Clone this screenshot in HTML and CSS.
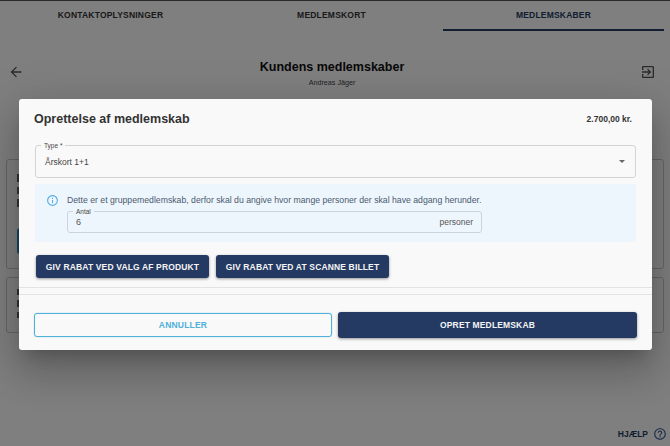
FILE: index.html
```html
<!DOCTYPE html>
<html lang="da">
<head>
<meta charset="utf-8">
<title>Kundens medlemskaber</title>
<link rel="stylesheet" href="styles.css">
</head>
<body>
<div class="page">
  <nav class="tabs">
    <div class="tab">KONTAKTOPLYSNINGER</div>
    <div class="tab">MEDLEMSKORT</div>
    <div class="tab tab-active">MEDLEMSKABER</div>
  </nav>
  <header class="head">
    <svg class="head-icon" viewBox="0 0 24 24" width="16" height="16"><path d="M20 11H7.83l5.59-5.59L12 4l-8 8 8 8 1.41-1.41L7.83 13H20z" fill="currentColor"/></svg>
    <div class="head-title">
      <h1>Kundens medlemskaber</h1>
      <p>Andreas Jäger</p>
    </div>
    <svg class="head-icon" viewBox="0 0 24 24" width="16" height="16"><path d="M3 5v4h2V5h14v14H5v-4H3v4a2 2 0 0 0 2 2h14c1.100 0 2-.9 2-2V5c0-1.100-.9-2-2-2H5c-1.100 0-2 .9-2 2zm7.590 10.590L12 17l5-5-5-5-1.410 1.410L13.170 11H3v2h10.170z" fill="currentColor"/></svg>
  </header>
  <section class="cards">
    <div class="card card-a"><div class="stub"></div><div class="stub"></div><div class="stub"></div><div class="card-btn"></div></div>
    <div class="card card-b"><div class="stub"></div><div class="stub"></div><div class="stub"></div></div>
  </section>
  <div class="help">HJÆLP
    <svg viewBox="0 0 24 24" width="14" height="14"><path d="M11 18h2v-2h-2v2zm1-16C6.480 2 2 6.480 2 12s4.480 10 10 10 10-4.480 10-10S17.520 2 12 2zm0 18c-4.410 0-8-3.590-8-8s3.590-8 8-8 8 3.590 8 8-3.590 8-8 8zm0-14c-2.210 0-4 1.790-4 4h2c0-1.100.9-2 2-2s2 .9 2 2c0 2-3 1.750-3 5h2c0-2.250 3-2.500 3-5 0-2.210-1.790-4-4-4z" fill="currentColor"/></svg>
  </div>
</div>
<div class="overlay"></div>
<div class="modal">
  <div class="modal-head">
    <h2>Oprettelse af medlemskab</h2>
    <span class="price">2.700,00 kr.</span>
  </div>
  <div class="select">
    <span class="legend">Type *</span>
    <span>Årskort 1+1</span>
    <span class="caret"></span>
  </div>
  <div class="info">
    <svg class="info-icon" viewBox="0 0 24 24" width="13" height="13"><path d="M11 7h2v2h-2zm0 4h2v6h-2zm1-9C6.480 2 2 6.480 2 12s4.480 10 10 10 10-4.480 10-10S17.520 2 12 2zm0 18c-4.410 0-8-3.590-8-8s3.590-8 8-8 8 3.590 8 8-3.590 8-8 8z" fill="currentColor"/></svg>
    <div class="info-body">
      <p>Dette er et gruppemedlemskab, derfor skal du angive hvor mange personer der skal have adgang herunder.</p>
      <div class="amount">
        <span class="legend legend-info">Antal</span>
        <span class="amount-value">6</span>
        <span class="amount-unit">personer</span>
      </div>
    </div>
  </div>
  <div class="discounts">
    <button class="btn">GIV RABAT VED VALG AF PRODUKT</button>
    <button class="btn">GIV RABAT VED AT SCANNE BILLET</button>
  </div>
  <div class="rules"></div>
  <div class="actions">
    <button class="btn-cancel">ANNULLER</button>
    <button class="btn btn-create">OPRET MEDLEMSKAB</button>
  </div>
</div>
</body>
</html>
```
FILE: styles.css
```css
* { box-sizing: border-box; }
html, body { margin: 0; height: 100%; }
body { font-family: "Liberation Sans", Arial, sans-serif; background: #fff; overflow: hidden; color: #222; }
h1, h2, p { margin: 0; }

.page { width: 670px; height: 446px; display: flex; flex-direction: column; position: relative; border-top: 1px solid #555; }
.tabs { display: flex; height: 30px; padding-right: 6px; }
.tab { flex: 1; text-align: center; font-size: 8.5px; font-weight: 700; line-height: 28px; letter-spacing: .2px; color: #333; height: 30px; }
.tab-active { color: #223a63; border-bottom: 2px solid #243a63; margin-left: 1px; }

.head { display: flex; justify-content: space-between; align-items: flex-start; padding: 28px 14px 0 8px; height: 98px; }
.head-icon { color: #555; margin-top: 5px; }
.head-title { text-align: center; }
.head-title h1 { font-size: 12.5px; line-height: 16px; color: #111; }
.head-title p { font-size: 7.2px; line-height: 12px; margin-top: 2px; color: #444; }

.cards { display: flex; flex-direction: column; gap: 8px; padding: 30px 6px 0; }
.card { border: 1px solid #ccc; border-radius: 3px; padding: 14px 10px; display: flex; flex-direction: column; gap: 5px; }
.card-a { height: 110px; }
.card-b { height: 56px; padding-top: 11px; }
.stub { width: 6px; height: 8px; background: #666; }
.card-btn { width: 6px; height: 28px; margin-top: 16px; background: #2f8fc0; border-radius: 3px 0 0 3px; }

.help { position: absolute; right: 3px; bottom: 5px; display: flex; align-items: center; gap: 5px; font-size: 8.5px; font-weight: 700; color: #243a63; }
.help svg { color: #3a5a96; }

.overlay { position: absolute; inset: 0; background: rgba(0, 0, 0, .5); }

.modal { position: absolute; left: 19px; top: 99px; width: 633px; height: 251px; background: #f9f9f9; border-radius: 3px; box-shadow: 0 11px 15px -7px rgba(0, 0, 0, .2), 0 24px 38px 3px rgba(0, 0, 0, .14), 0 9px 46px 8px rgba(0, 0, 0, .12); padding: 0 15px; display: flex; flex-direction: column; }
.modal-head { display: flex; justify-content: space-between; align-items: center; height: 40px; padding-right: 5px; }
.modal-head h2 { font-size: 12.5px; font-weight: 700; color: #333; }
.price { font-size: 8.5px; font-weight: 700; color: #333; }

.select { position: relative; display: flex; justify-content: space-between; align-items: center; height: 33px; margin: 6px 1px 0; padding: 0 10px 0 9px; border: 1px solid #d4d4d4; border-radius: 3px; font-size: 8.5px; color: #444; }
.caret { width: 0; height: 0; border-left: 3.5px solid transparent; border-right: 3.5px solid transparent; border-top: 3.5px solid #666; }
.legend { position: absolute; left: 5px; top: -5px; font-size: 6.5px; line-height: 9px; padding: 0 3px; background: #f9f9f9; color: #444; }

.info { display: flex; height: 58px; margin: 6px 1px 0; padding: 9px 11px; background: #eef6fd; gap: 8px; }
.info-icon { color: #5aaee6; margin-top: 1px; flex: none; }
.info-body { display: flex; flex-direction: column; gap: 4px; }
.info-body p { font-size: 8.7px; line-height: 13px; color: #4a5a6e; padding-top: 1px; }
.amount { position: relative; width: 415px; height: 22px; display: flex; justify-content: space-between; align-items: center; padding: 0 8px; border: 1px solid #ccd3dc; border-radius: 3px; font-size: 8.5px; color: #555; }
.legend-info { background: #eef6fd; }
.amount-value { font-size: 9px; }

.discounts { display: flex; gap: 7px; margin: 13px 0 0 2px; }
.btn { height: 23px; width: 173px; padding: 0; border: 0; border-radius: 3px; background: #243a63; color: #f4f4f4; font-family: inherit; font-size: 8.5px; font-weight: 700; letter-spacing: .15px; box-shadow: 0 1px 3px rgba(0, 0, 0, .4); }

.rules { height: 8px; margin: 9px -15px 0; border-top: 1px solid #e3e3e3; border-bottom: 1px solid #e3e3e3; }

.actions { display: flex; gap: 6px; margin-top: 18px; }
.btn-cancel { width: 298px; height: 24px; border: 1px solid #4fb0d8; border-radius: 3px; background: transparent; box-shadow: 0 0 1px #4fb0d8; color: #4fb0d8; font-family: inherit; font-size: 8.5px; font-weight: 700; letter-spacing: .2px; }
.btn-create { width: 299px; height: 26px; margin-top: -1px; }
```
